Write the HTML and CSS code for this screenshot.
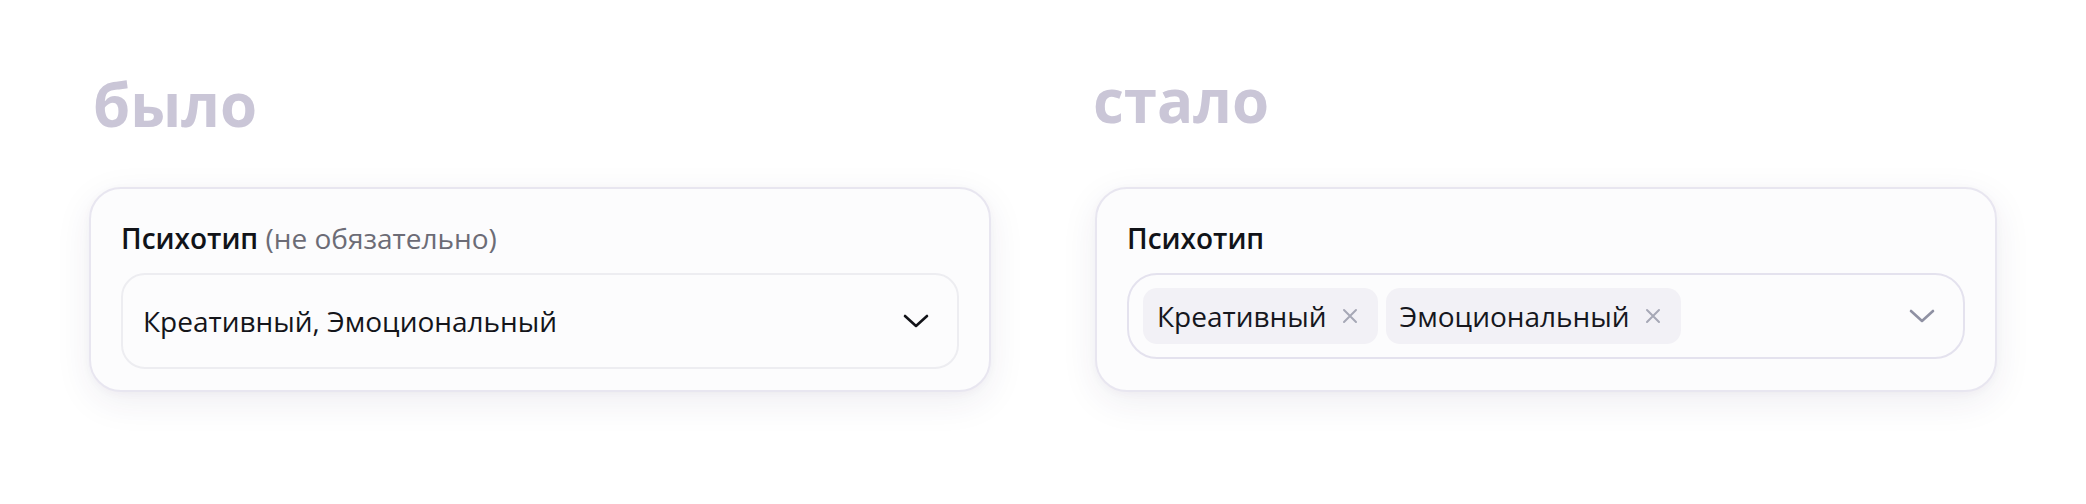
FILE: index.html
```html
<!DOCTYPE html>
<html lang="ru">
<head>
    <meta charset="UTF-8">
    <meta name="viewport" content="width=device-width, initial-scale=1.0">
    <title>Психотип: было / стало</title>
    <link rel="stylesheet" href="styles.css">
</head>
<body>
    <div class="compare">
        <h2 class="compare-title compare-title--before">было</h2>
        <h2 class="compare-title compare-title--after">стало</h2>

        <!-- Old select: plain comma-separated value -->
        <div class="field-card">
            <div class="field-label">Психотип <span class="field-hint">(не обязательно)</span></div>
            <div class="select select--plain">
                <span class="select-value">Креативный, Эмоциональный</span>
                <svg class="select-arrow" width="26" height="16" viewBox="0 0 26 16">
                    <path d="M2 3l11 10 11-10" fill="none" stroke="currentColor" stroke-width="2.6" stroke-linecap="round" stroke-linejoin="round"/>
                </svg>
            </div>
        </div>

        <!-- New select: removable tags -->
        <div class="field-card">
            <div class="field-label">Психотип</div>
            <div class="select select--tags">
                <div class="tags">
                    <span class="tag">Креативный
                        <svg class="tag-remove" width="16" height="16" viewBox="0 0 16 16">
                            <path d="M2 2l12 12M14 2L2 14" stroke="currentColor" stroke-width="2" stroke-linecap="round"/>
                        </svg>
                    </span>
                    <span class="tag">Эмоциональный
                        <svg class="tag-remove" width="16" height="16" viewBox="0 0 16 16">
                            <path d="M2 2l12 12M14 2L2 14" stroke="currentColor" stroke-width="2" stroke-linecap="round"/>
                        </svg>
                    </span>
                </div>
                <svg class="select-arrow select-arrow--muted" width="26" height="16" viewBox="0 0 26 16">
                    <path d="M2 3l11 10 11-10" fill="none" stroke="currentColor" stroke-width="2.6" stroke-linecap="round" stroke-linejoin="round"/>
                </svg>
            </div>
        </div>
    </div>
</body>
</html>
```

FILE: styles.css
```css
/* General Reset */
* {
    margin: 0;
    padding: 0;
    box-sizing: border-box;
}

body {
    font-family: "Open Sans", "Noto Sans", sans-serif;
    background-color: #ffffff;
    color: #14151a;
}

/* Two columns: titles on the first row, cards on the second */
.compare {
    display: grid;
    grid-template-columns: 902px 902px;
    column-gap: 104px;
    padding: 68px 89px 100px;
}

.compare-title {
    font-size: 60px;
    line-height: 72px;
    font-weight: 700;
    color: #cac6d7;
    margin-bottom: 47px;
}

.compare-title--before {
    padding-left: 4px;
}

.compare-title--after {
    margin-top: -4px;
    margin-bottom: 51px;
    margin-left: -2px;
}

.field-card {
    background-color: #fcfcfd;
    border: 2px solid #e8e6f0;
    border-radius: 32px;
    padding: 29px 30px 21px;
    box-shadow: 0 10px 36px rgba(48, 40, 90, 0.08), 0 2px 8px rgba(48, 40, 90, 0.03);
}

.field-label {
    font-size: 28px;
    line-height: 40px;
    font-weight: 600;
    color: #111318;
    margin-bottom: 15px;
}

.field-hint {
    font-weight: 400;
    color: #6c6c76;
}

.select {
    display: flex;
    align-items: center;
    justify-content: space-between;
    background-color: #fcfcfd;
    font-size: 28px;
}

.select--plain {
    height: 96px;
    padding: 0 28px 0 20px;
    border: 2px solid #ededf1;
    border-radius: 24px;
}

.select--tags {
    height: 86px;
    margin-top: 2px;
    padding: 0 28px 0 14px;
    border: 2px solid #e4e2ee;
    border-radius: 30px;
}

.select-value {
    color: #14151a;
}

.select-arrow {
    color: #121318;
    flex-shrink: 0;
}

.select-arrow--muted {
    color: #8f91a3;
}

.tags {
    display: flex;
    gap: 8px;
}

.tag {
    display: inline-flex;
    align-items: center;
    gap: 15px;
    height: 56px;
    padding: 0 20px 0 14px;
    border-radius: 14px;
    background-color: #f2f1f6;
    color: #16171d;
}

.tag-remove {
    color: #a6a8b6;
}
```
